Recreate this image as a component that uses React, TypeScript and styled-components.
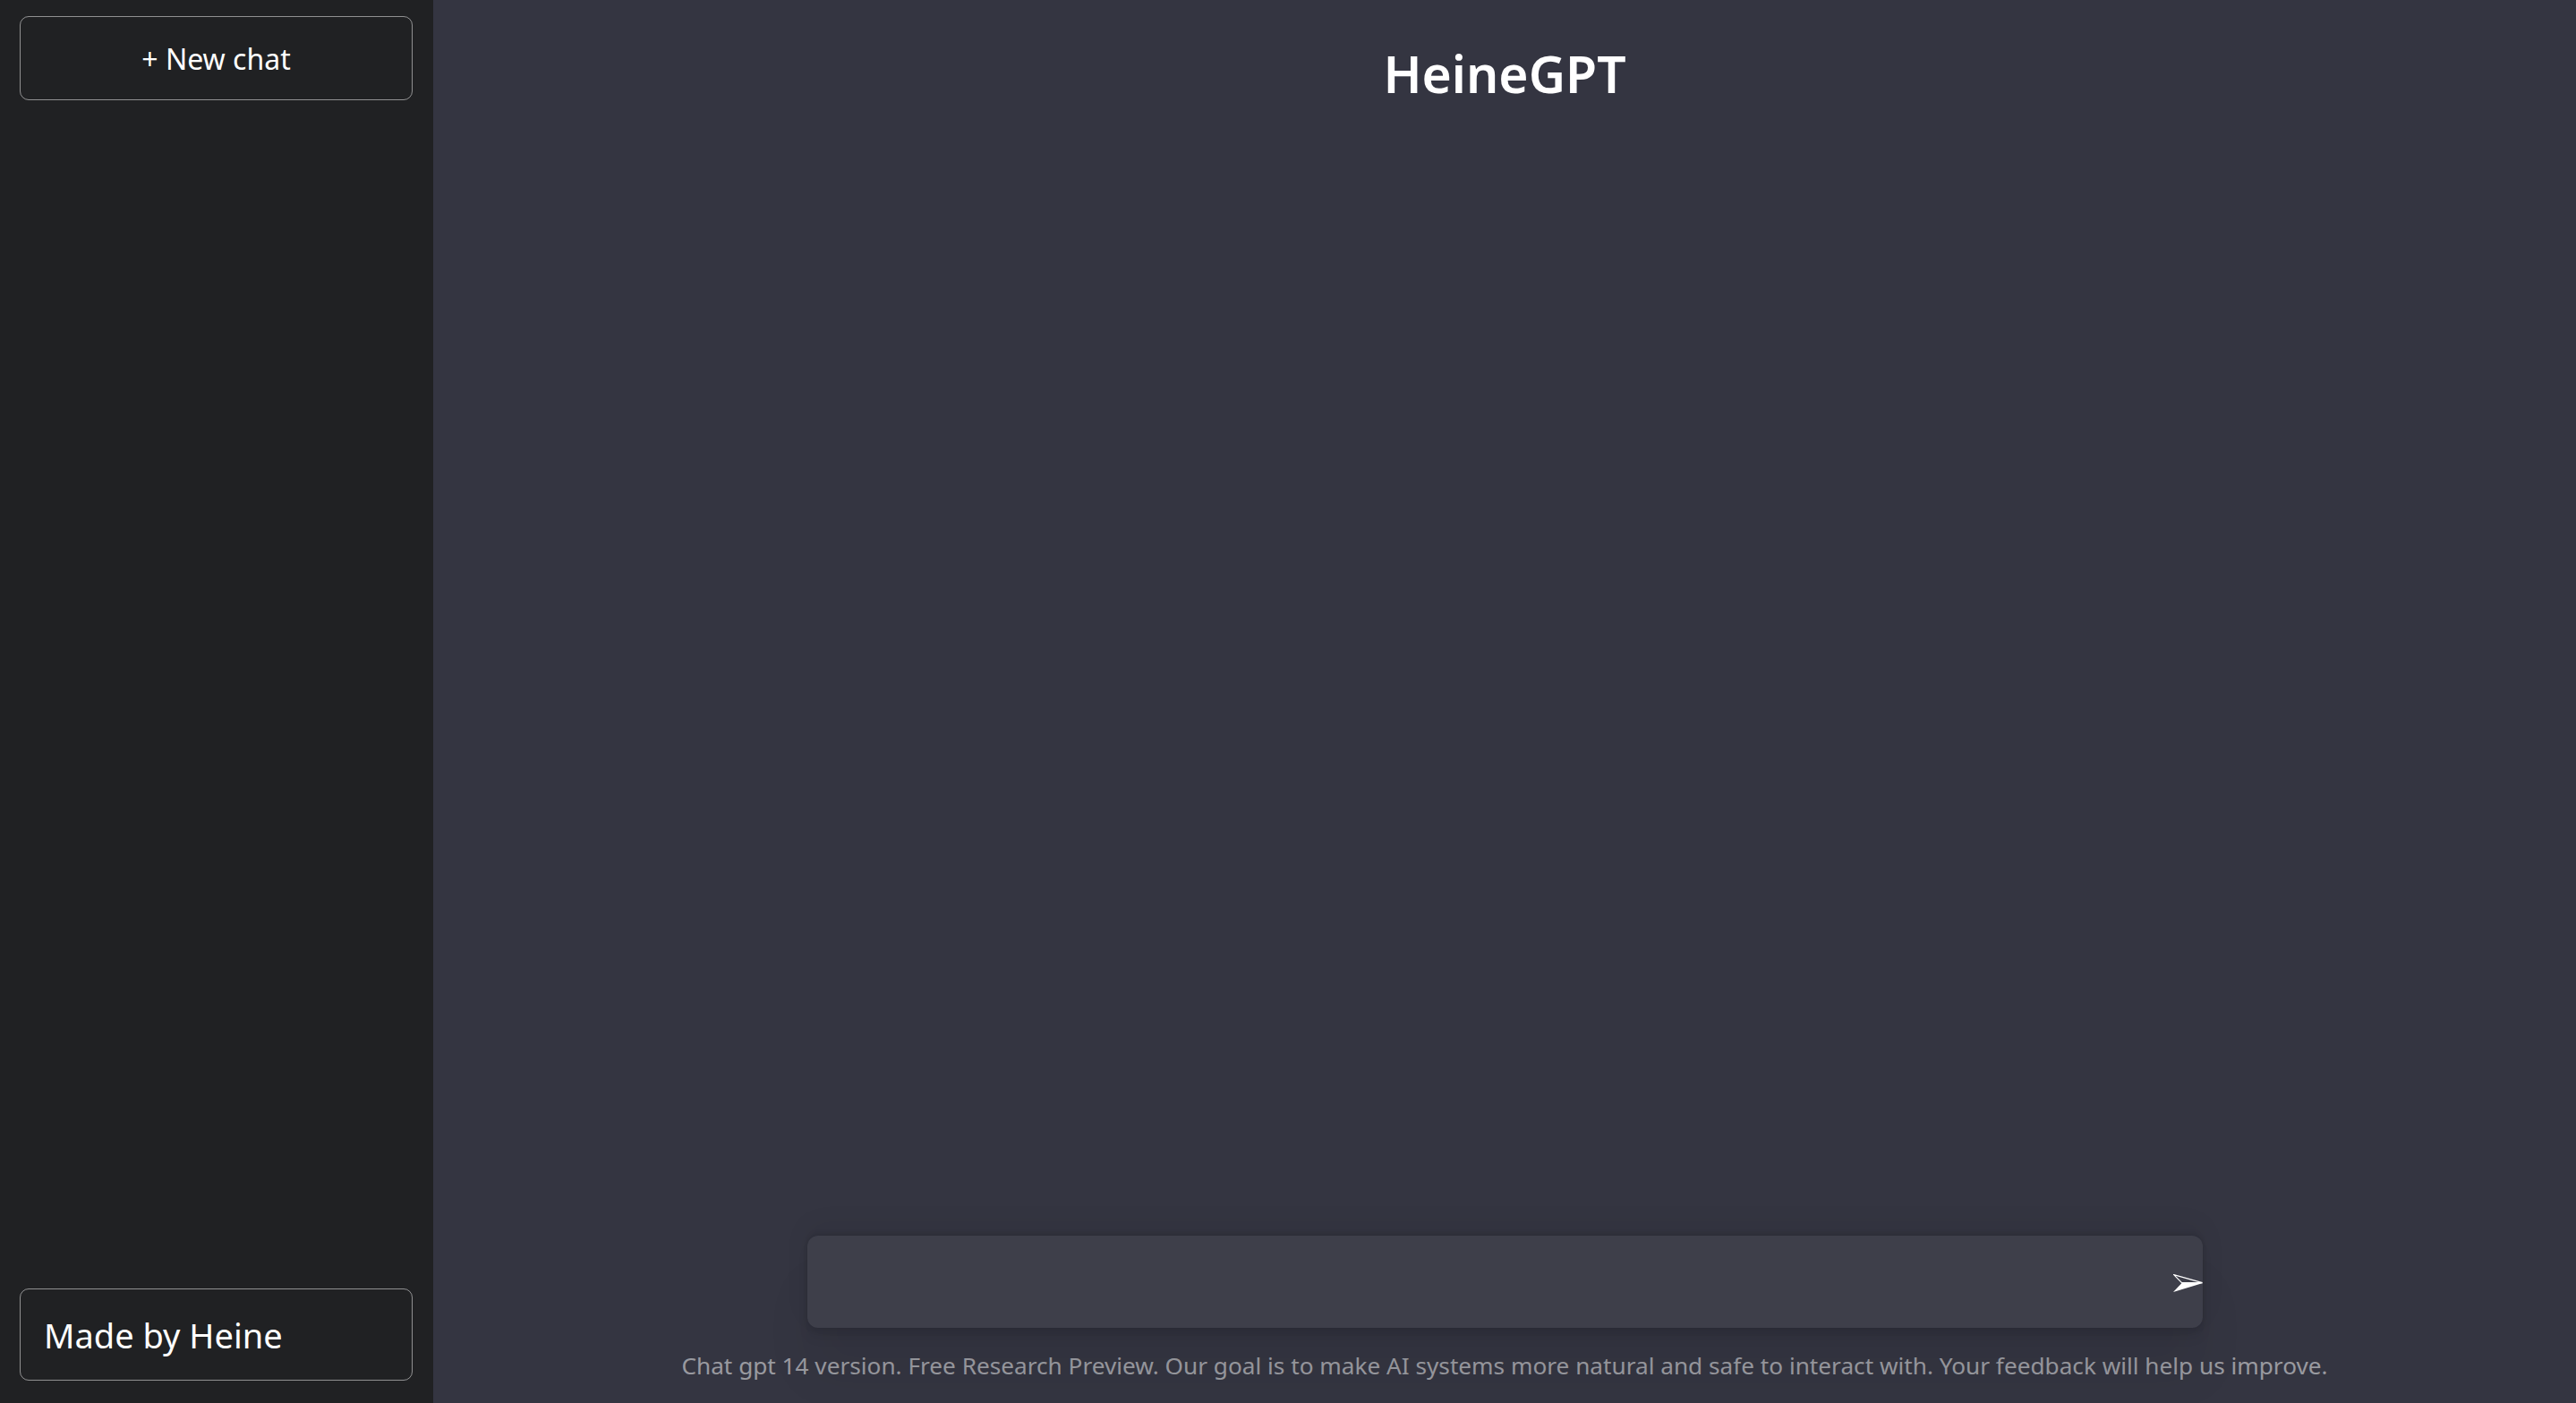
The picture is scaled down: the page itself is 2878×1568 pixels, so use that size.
import React from "react";
import styled, { createGlobalStyle } from "styled-components";

const GlobalStyle = createGlobalStyle`
  html, body {
    margin: 0;
    padding: 0;
    background: #343541;
  }
  body {
    font-family: "Noto Sans", "Open Sans", "DejaVu Sans", sans-serif;
    color: #ffffff;
  }
  * { box-sizing: border-box; }
`;

const Page = styled.div`
  display: flex;
  width: 100vw;
  height: 100vh;
  overflow: hidden;
`;

const SideBar = styled.section`
  width: 484px;
  flex: 0 0 484px;
  height: 100%;
  background-color: #202123;
  display: flex;
  flex-direction: column;
  justify-content: space-between;
`;

const NewChatButton = styled.button`
  margin: 18px 23px 0 22px;
  height: 94px;
  border: 1px solid rgba(255, 255, 255, 0.5);
  border-radius: 10px;
  background: transparent;
  color: #ffffff;
  font-family: inherit;
  font-size: 32px;
  cursor: pointer;
`;

const Credit = styled.nav`
  margin: 0 23px 25px 22px;
  height: 103px;
  border: 1px solid rgba(255, 255, 255, 0.5);
  border-radius: 10px;
  padding-left: 26px;
  display: flex;
  align-items: center;
  font-size: 38px;
  color: #ffffff;
`;

const Main = styled.section`
  flex: 1;
  height: 100%;
  background-color: #343541;
  display: flex;
  flex-direction: column;
  align-items: center;
  justify-content: space-between;
  text-align: center;
`;

const Title = styled.h1`
  margin: 43px 0 0;
  font-size: 57px;
  line-height: 78px;
  font-weight: 600;
  color: #ffffff;
`;

const BottomSection = styled.div`
  width: 100%;
  display: flex;
  flex-direction: column;
  align-items: center;
`;

const InputContainer = styled.div`
  position: relative;
  width: 1559px;
  display: flex;
`;

const ChatInput = styled.input`
  width: 100%;
  height: 103px;
  border: none;
  outline: none;
  font-family: inherit;
  font-size: 36px;
  color: #ffffff;
  background-color: rgba(255, 255, 255, 0.05);
  padding: 22px 28px;
  border-radius: 12px;
  box-shadow: rgba(0, 0, 0, 0.05) 0 54px 55px, rgba(0, 0, 0, 0.05) 0 -12px 30px,
    rgba(0, 0, 0, 0.05) 0 4px 6px, rgba(0, 0, 0, 0.05) 0 12px 13px,
    rgba(0, 0, 0, 0.09) 0 -3px 5px;
`;

const Submit = styled.div`
  position: absolute;
  right: 0;
  top: 43px;
  width: 33px;
  height: 20px;
  display: flex;
  cursor: pointer;
`;

const Info = styled.p`
  margin: 0;
  padding: 24px 20px 24px;
  font-size: 26.2px;
  line-height: 36px;
  color: rgba(255, 255, 255, 0.5);
`;

const SendIcon = () => (
  <svg width="33" height="20" viewBox="0 0 33 20" fill="none">
    <path d="M0.6 0.6 L32.6 9.6 L9.6 9.6 Z" stroke="#ffffff" strokeWidth="1.2" strokeLinejoin="miter" fill="none" />
    <path d="M0 20 L33 10 L9.5 10 Z" fill="#ffffff" />
  </svg>
);

export default function App() {
  return (
    <>
      <GlobalStyle />
      <Page>
        <SideBar>
          <NewChatButton>+ New chat</NewChatButton>
          <Credit>Made by Heine</Credit>
        </SideBar>
        <Main>
          <Title>HeineGPT</Title>
          <BottomSection>
            <InputContainer>
              <ChatInput />
              <Submit>
                <SendIcon />
              </Submit>
            </InputContainer>
            <Info>
              Chat gpt 14 version. Free Research Preview. Our goal is to make AI systems more natural and safe to interact with. Your feedback will help us improve.
            </Info>
          </BottomSection>
        </Main>
      </Page>
    </>
  );
}
